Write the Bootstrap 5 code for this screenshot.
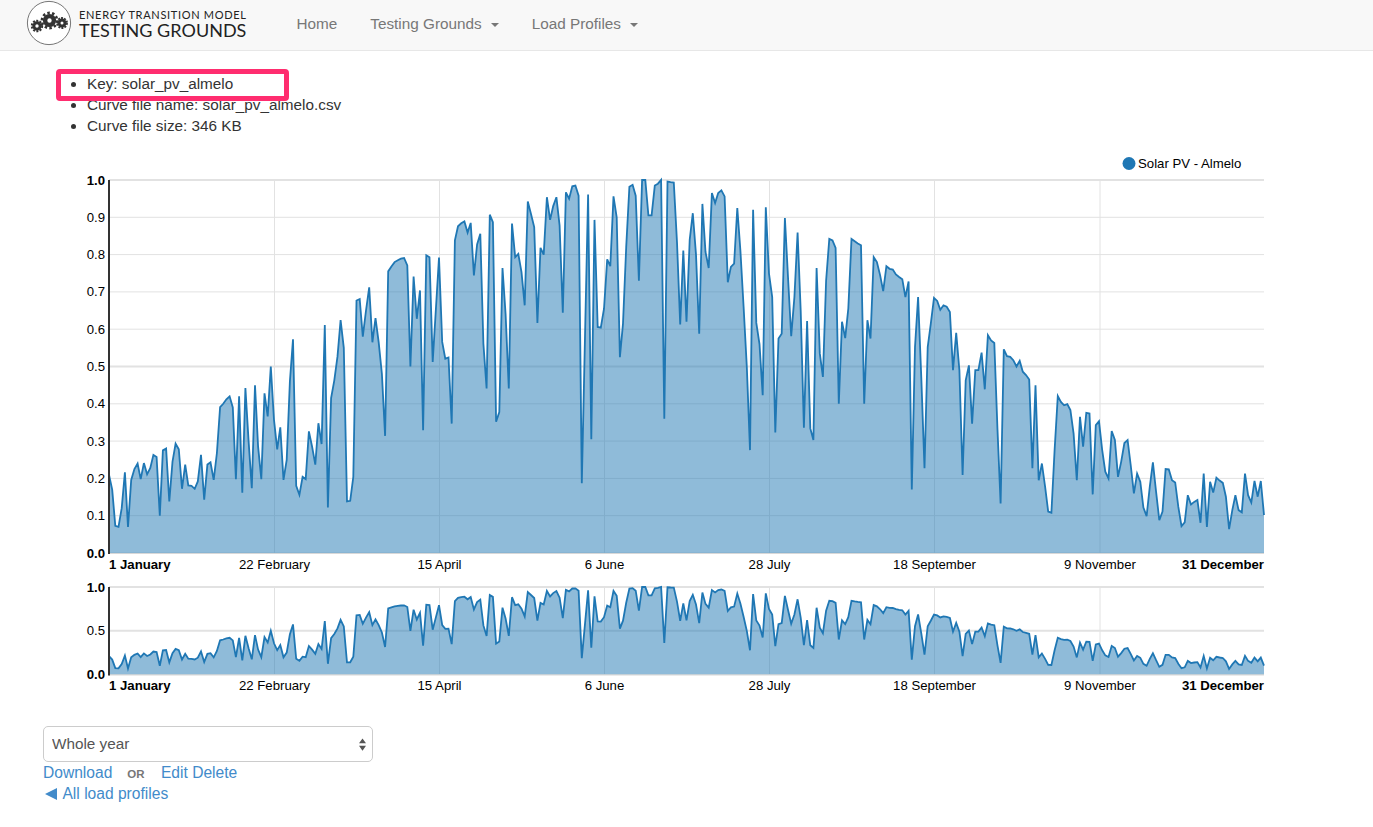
<!DOCTYPE html>
<html lang="en">
<head>
  <meta charset="UTF-8" />
  <meta name="viewport" content="width=device-width, initial-scale=1" />
  <title>Solar PV - Almelo</title>
  <link href="https://cdn.jsdelivr.net/npm/bootstrap@5.3.3/dist/css/bootstrap.min.css" rel="stylesheet" />
  <style>
    body {
      font-family: "Liberation Sans", Arial, sans-serif;
      font-size: 15.3px;
      line-height: 21px;
      color: #333;
      background: #fff;
    }
    a { color: #428bca; text-decoration: none; }
    .top-bar {
      --bs-navbar-nav-link-padding-x: 16.5px;
      height: 51px;
      padding: 0 0 4px;
      background: #f8f8f8;
      border-bottom: 1px solid #e7e7e7;
    }
    .top-bar .nav-link { color: #777; line-height: 21px; padding-top: 0; padding-bottom: 0; }
    .top-bar .dropdown-toggle::after { margin-left: 9px; border-width: 4px 4px 0; vertical-align: 2px; }
    .brand-box { width: 280px; padding-left: 26px; }
    .brand-text { margin-left: 7px; color: #222; font-family: "Lato", "Open Sans", sans-serif; }
    .brand-small { font-size: 11px; line-height: 13px; letter-spacing: .68px; }
    .brand-big { font-size: 18px; line-height: 18px; letter-spacing: .02px; }
    .page-body { padding: 22px 0 0 43px; }
    .meta-list { position: relative; width: 320px; margin: 0 0 0 14px; padding-left: 30px; }
    .key-box {
      position: absolute;
      left: -1px;
      top: -4.5px;
      width: 233px;
      height: 32px;
      border: 5px solid #ff2d6f;
      border-radius: 4px;
    }
    .chart-svg { display: block; font-family: "Liberation Sans", Arial, sans-serif; font-size: 13.2px; }
    .focus-chart { margin-top: 14px; }
    .period-select {
      width: 330px;
      height: 36px;
      margin-top: 31px;
      padding: 0 24px 0 8px;
      font-size: 15.3px;
      color: #555;
      border: 1px solid #ccc;
      border-radius: 5px;
      background-image: url("data:image/svg+xml,%3csvg xmlns='http://www.w3.org/2000/svg' viewBox='0 0 8 14'%3e%3cpath fill='%23555' d='M4 0l4 5.5H0zM4 14L0 8.5h8z'/%3e%3c/svg%3e");
      background-position: right 6px center;
      background-size: 7px 13px;
    }
    .link-row { font-size: 15.6px; height: 21px; }
    .or-word { margin: 0 12px 0 15px; font-size: 11.5px; font-weight: 700; color: #777; }
    .back-arrow {
      display: inline-block;
      margin: 0 2px 0 2px;
      border-style: solid;
      border-width: 6px 12px 6px 0;
      border-color: transparent #428bca transparent transparent;
      vertical-align: -1px;
    }
  </style>
</head>
<body>
  <nav class="navbar navbar-expand top-bar">
    <div class="d-flex align-items-center brand-box">
      <svg width="46" height="46" viewBox="0 0 46 46">
        <circle cx="23" cy="23" r="21.6" fill="#fff" stroke="#777" stroke-width="1" />
        <g fill="none" stroke="#333">
          <circle cx="11" cy="26" r="3.2" stroke-width="3" />
          <circle cx="11" cy="26" r="5.2" stroke-width="2" stroke-dasharray="2 1.3" />
          <circle cx="23.5" cy="20.5" r="4.4" stroke-width="4.4" />
          <circle cx="23.5" cy="20.5" r="7.6" stroke-width="2.6" stroke-dasharray="2.5 2.27" />
          <circle cx="36" cy="23" r="3" stroke-width="3" />
          <circle cx="36" cy="23" r="5" stroke-width="1.8" stroke-dasharray="2 1.14" />
        </g>
      </svg>
      <div class="brand-text">
        <div class="brand-small">ENERGY TRANSITION MODEL</div>
        <div class="brand-big">TESTING GROUNDS</div>
      </div>
    </div>
    <ul class="navbar-nav">
      <li class="nav-item"><a class="nav-link" href="#">Home</a></li>
      <li class="nav-item dropdown"><a class="nav-link dropdown-toggle" href="#" data-bs-toggle="dropdown">Testing Grounds</a></li>
      <li class="nav-item dropdown"><a class="nav-link dropdown-toggle" href="#" data-bs-toggle="dropdown">Load Profiles</a></li>
    </ul>
  </nav>

  <main class="page-body">
    <ul class="meta-list">
      <li>Key: solar_pv_almelo</li>
      <li>Curve file name: solar_pv_almelo.csv</li>
      <li>Curve file size: 346 KB</li>
      <span class="key-box"></span>
    </ul>

    <svg id="focusChart" class="chart-svg focus-chart" width="1240" height="424"></svg>
    <svg id="contextChart" class="chart-svg" width="1240" height="121"></svg>

    <select class="form-select period-select">
      <option>Whole year</option>
    </select>
    <div class="link-row"><a href="#">Download</a><span class="or-word">OR</span> <a href="#">Edit</a> <a href="#">Delete</a></div>
    <div class="link-row"><a href="#"><span class="back-arrow"></span> All load profiles</a></div>
  </main>

  <script src="https://cdn.jsdelivr.net/npm/bootstrap@5.3.3/dist/js/bootstrap.bundle.min.js"></script>
  <script>
    // daily values, read off the curve (x 100)
    const curve = [
      21,17,7.3,7,12,21.6,7,19.6,22.5,24,19.8,24.1,21.1,22.8,26.3,25.7,10,27.5,28,13.8,24.5,29.3,27.8,17.2,23.7,18.1,18,17.2,19.2,26.3,
      14.3,23.7,24.3,19.6,26.8,39.1,40,41.2,42,39,19.8,42,16.2,44.2,30,17.4,45,28.5,19.8,42.8,36.6,50,35.7,27.8,33.7,19.6,25,46,57.3,18,
      15.6,20.4,19.8,32.6,28.5,23.7,34.8,29.2,61.1,12.2,41.5,46.3,52.7,62.4,55,13.8,14,20.4,67.7,68.1,58,65,71.2,56.5,63,56.5,48,31.4,75.5,76.8,
      78,78.5,78.9,79.1,77.1,50,74.1,62.8,70.4,32.9,79.8,79.3,51.2,65,79.2,56.6,52.1,52.4,34.7,83.8,87.6,88.4,88.9,85.9,88.5,74.4,82.7,85.6,56.1,44.1,
      90.7,88.7,35.2,37.8,76.4,64,44.1,88.3,79.3,80.2,75.3,66.4,94.2,90.9,87.4,61.7,81.8,80,95.4,89.3,93,95.4,87.8,64.4,96.7,95,98.3,98.5,95.8,18.7,
      58,96.1,30.5,89.3,60.6,60.4,65.5,78.7,76.9,95.6,90,52.5,61.5,82,98.2,98.7,95.8,73,100,100,90.5,90.5,98.5,99,100,36,99.6,99.4,99.3,83.3,
      61.3,81.1,62,84,91.1,80,58.8,93.6,80.7,76.4,96.5,93.8,96.5,97.2,95.6,72.6,76.7,77.6,92.5,81.1,66,50,27.6,92,61.7,56,42.3,92.7,74.9,68.6,
      32.3,57.5,58.8,89.8,74,58.1,68.6,85.9,65,33.6,62.2,33.4,30.3,76.4,53.5,47.2,73,84.2,83.8,81.8,40,62,57.6,65.5,84.2,83.6,83,82.5,40,62.4,
      57.5,79.3,78,74.5,70.2,76.9,76.2,76,74.7,74,73.4,68.6,72.8,17,55.2,68.6,47,22.7,55.2,61.5,68.4,67.6,65.2,66.4,66,64.6,49,59,49,20.9,
      46.3,50.3,34.7,49,49,53.7,43.9,58.4,57,56.3,33,13.3,54.6,52.8,52.6,51.7,50,51.5,48.6,47.7,46.5,22.7,45,19.5,24,17.8,11.1,10.8,27.6,42.1,
      40.5,39.6,39.9,38.3,32,19.5,36.5,28.5,37.6,37.4,15.7,34.3,35.3,27.6,21.8,20,32.7,30.3,20.4,24.5,29.5,30.3,23.6,16,21.3,19.1,12.2,9.9,17.8,24.3,
      16.4,8.8,11.1,22.5,22.4,19.5,18.9,12.4,7.2,8.2,15.5,13,13.7,14.2,8.1,21.3,7,19.1,16.2,20.2,19.4,18.8,15.1,6.4,11.5,15.5,11.5,10.9,21.3,15.5,
      13.5,19.3,15.1,19.3,10.2
    ];
    const dateTicks = [
      { day: 0, label: "1 January", bold: true, anchor: "start" },
      { x: 275, label: "22 February" },
      { x: 440, label: "15 April" },
      { x: 605, label: "6 June" },
      { x: 770, label: "28 July" },
      { x: 935, label: "18 September" },
      { x: 1100.5, label: "9 November" },
      { day: 364, label: "31 December", bold: true, anchor: "end" }
    ];
    const originX = 43; // left edge of the svg on the page
    const plotLeft = 109 - originX;
    const plotRight = 1264 - originX;

    function el(svg, name, attrs, text) {
      const node = document.createElementNS("http://www.w3.org/2000/svg", name);
      Object.keys(attrs).forEach(k => node.setAttribute(k, attrs[k]));
      if (text) node.textContent = text;
      svg.appendChild(node);
      return node;
    }

    function drawChart(id, top, bottom, yTicks, labelY) {
      const svg = document.getElementById(id);
      const yOf = v => bottom - (bottom - top) * v;
      const xOf = d => plotLeft + (plotRight - plotLeft) * d / 364;

      yTicks.forEach(v => {
        const heavy = v === 1 || v === 0.5;
        el(svg, "line", { x1: plotLeft, x2: plotRight, y1: yOf(v), y2: yOf(v), stroke: "#e2e2e2", "stroke-width": heavy ? 2 : 1 });
        const edge = v === 1 || v === 0;
        el(svg, "text", { x: plotLeft - 4, y: yOf(v) + 4.5, "text-anchor": "end", fill: "#000", "font-weight": edge ? 700 : 400 }, v.toFixed(1));
      });
      dateTicks.filter(t => t.x).forEach(t => {
        const x = t.x - originX - 0.5;
        el(svg, "line", { x1: x, x2: x, y1: top, y2: bottom, stroke: "#e2e2e2" });
      });

      const pts = curve.map((v, d) => xOf(d).toFixed(1) + "," + yOf(v / 100).toFixed(1));
      el(svg, "path", { d: "M" + xOf(0) + "," + bottom + "L" + pts.join("L") + "L" + xOf(364) + "," + bottom + "Z", fill: "#1f77b4", "fill-opacity": 0.5 });
      el(svg, "path", { d: "M" + pts.join("L"), fill: "none", stroke: "#1f77b4", "stroke-width": 1.8 });

      el(svg, "line", { x1: plotLeft, x2: plotRight, y1: bottom + 0.5, y2: bottom + 0.5, stroke: "#d8d8d8" });
      el(svg, "line", { x1: plotLeft, x2: plotLeft, y1: top, y2: bottom + 1, stroke: "#333", "stroke-width": 2 });

      dateTicks.forEach(t => {
        const x = t.x ? t.x - originX - 0.5 : xOf(t.day);
        el(svg, "text", { x: x, y: labelY, fill: "#000", "text-anchor": t.anchor || "middle", "font-weight": t.bold ? 700 : 400 }, t.label);
      });
    }

    // 1.0 .. 0.0 every tenth on the big chart, three ticks on the small one
    drawChart("focusChart", 30, 403, [1, .9, .8, .7, .6, .5, .4, .3, .2, .1, 0], 419);
    drawChart("contextChart", 13, 100.5, [1, .5, 0], 116);

    // legend
    const legendSvg = document.getElementById("focusChart");
    el(legendSvg, "circle", { cx: 1129 - originX, cy: 13.5, r: 6.5, fill: "#1f77b4" });
    el(legendSvg, "text", { x: 1138 - originX, y: 18, fill: "#000" }, "Solar PV - Almelo");
  </script>
</body>
</html>
